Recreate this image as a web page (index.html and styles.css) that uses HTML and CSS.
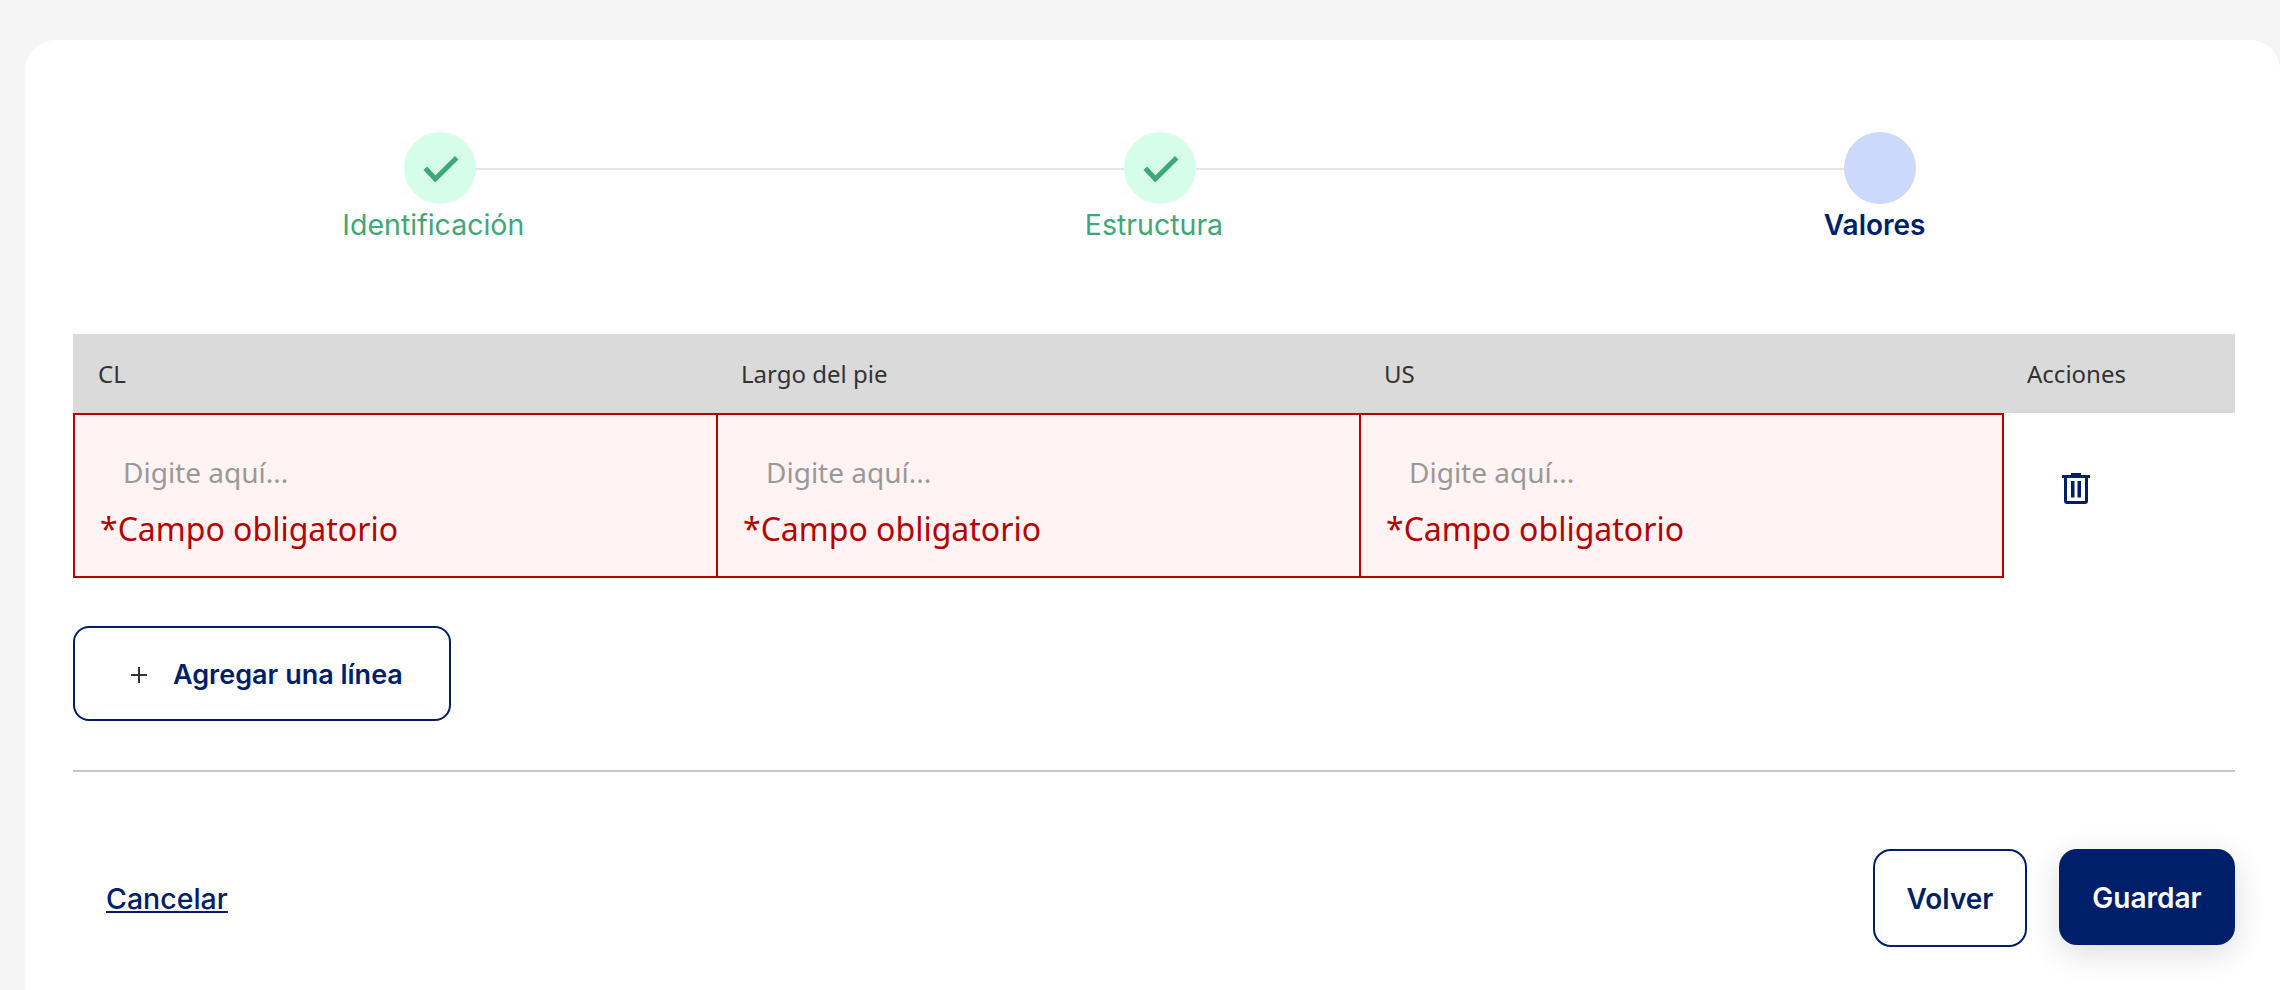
FILE: index.html
```html
<!DOCTYPE html>
<html lang="es">
<head>
    <meta charset="UTF-8">
    <meta name="viewport" content="width=device-width, initial-scale=1.0">
    <title>Valores</title>
    <link rel="stylesheet" href="styles.css">
</head>
<body>
    <div class="card">
        <div class="stepper">
            <div class="step step-done">
                <span class="step-circle">
                    <svg width="72" height="72" viewBox="0 0 72 72"><path d="M21.3 36.3 L31.3 47 L52.7 25.7" fill="none" stroke="#3fa876" stroke-width="5"/></svg>
                </span>
                <span class="step-label">Identificación</span>
            </div>
            <div class="step step-done">
                <span class="step-circle">
                    <svg width="72" height="72" viewBox="0 0 72 72"><path d="M21.3 36.3 L31.3 47 L52.7 25.7" fill="none" stroke="#3fa876" stroke-width="5"/></svg>
                </span>
                <span class="step-label">Estructura</span>
            </div>
            <div class="step step-current">
                <span class="step-circle"></span>
                <span class="step-label">Valores</span>
            </div>
        </div>

        <div class="values-table">
            <div class="head-cell">CL</div>
            <div class="head-cell">Largo del pie</div>
            <div class="head-cell">US</div>
            <div class="head-cell">Acciones</div>

            <div class="value-cell">
                <input class="value-input" type="text" placeholder="Digite aquí...">
                <p class="error-text">*Campo obligatorio</p>
            </div>
            <div class="value-cell">
                <input class="value-input" type="text" placeholder="Digite aquí...">
                <p class="error-text">*Campo obligatorio</p>
            </div>
            <div class="value-cell">
                <input class="value-input" type="text" placeholder="Digite aquí...">
                <p class="error-text">*Campo obligatorio</p>
            </div>
            <div class="action-cell">
                <svg width="28" height="31" viewBox="0 0 28 31"><path d="M9 0 H19 V2 H28 V5 H26 V28 Q26 31 23 31 H5 Q2 31 2 28 V5 H0 V2 H9 Z M5 5 V28 H23 V5 Z M9 8 H12.5 V24.5 H9 Z M15.5 8 H19 V24.5 H15.5 Z" fill="#001f6b" fill-rule="evenodd"/></svg>
            </div>
        </div>

        <button class="add-line">
            <svg class="plus" width="16" height="16" viewBox="0 0 16 16"><path d="M8 0 V16 M0 8 H16" fill="none" stroke="#333333" stroke-width="2"/></svg>
            Agregar una línea
        </button>

        <div class="footer">
            <a class="cancel" href="#">Cancelar</a>
            <div class="footer-buttons">
                <button class="btn btn-outline">Volver</button>
                <button class="btn btn-primary">Guardar</button>
            </div>
        </div>
    </div>
</body>
</html>
```

FILE: styles.css
```css
body {
    margin: 0;
    padding: 40px 0 0 25px;
    height: 990px;
    box-sizing: border-box;
    overflow: hidden;
    background-color: #f5f5f5;
    font-family: 'Inter', sans-serif;
}

.card {
    height: 950px;
    box-sizing: border-box;
    padding: 92px 45px 0 48px;
    background: #ffffff;
    border-radius: 30px 30px 0 0;
}

/* Stepper */
.stepper {
    display: grid;
    grid-template-columns: repeat(3, 1fr);
}

.step {
    position: relative;
    display: flex;
    flex-direction: column;
    align-items: center;
}

.step-circle {
    width: 72px;
    height: 72px;
    margin-left: 14px;
    border-radius: 50%;
}

.step:nth-child(2) .step-circle {
    margin-left: 12px;
}

.step:nth-child(3) .step-circle {
    margin-left: 10px;
}

.step-done .step-circle {
    background: #d6fdea;
}

.step-current .step-circle {
    background: #ccd9fd;
}

.step-done::after {
    content: "";
    position: absolute;
    top: 36px;
    left: calc(50% + 42px);
    width: calc(100% - 72px);
    height: 2px;
    background: #e5e5e5;
}

.step-label {
    margin-top: 1px;
    line-height: 40px;
}

.step-done .step-label {
    font-size: 28.5px;
    color: #3fa876;
}

.step-current .step-label {
    font-size: 28px;
    color: #001f6b;
    font-weight: 600;
}

/* Tabla */
.values-table {
    display: grid;
    grid-template-columns: 643px 643px 643px 233px;
    margin-top: 89px;
    font-family: 'Noto Sans', sans-serif;
}

.head-cell {
    height: 79px;
    padding-left: 25px;
    display: flex;
    align-items: center;
    background: #dadada;
    font-size: 24px;
    color: #333333;
}

.value-cell {
    height: 165px;
    box-sizing: border-box;
    padding: 38px 24px 0 25px;
    margin-right: -2px;
    background: #fff3f3;
    border: 2px solid #b40404;
}

.value-input {
    display: block;
    width: 100%;
    padding: 0 0 0 23px;
    border: none;
    outline: none;
    background: transparent;
    font-family: inherit;
    font-size: 28px;
    line-height: 38px;
}

.value-input::placeholder {
    color: #999999;
}

.error-text {
    margin: 18px 0 0;
    font-size: 32px;
    line-height: 40px;
    color: #b40404;
}

.action-cell {
    padding: 60px 0 0 60px;
}

/* Botones */
.add-line {
    display: flex;
    align-items: center;
    width: 378px;
    height: 95px;
    margin-top: 48px;
    padding: 2px 0 0 56px;
    border: 2px solid #001f6b;
    border-radius: 16px;
    background: #ffffff;
    color: #001f6b;
    font-family: inherit;
    font-size: 27px;
    font-weight: 600;
    cursor: pointer;
}

.plus {
    margin-right: 26px;
}

.footer {
    display: flex;
    justify-content: space-between;
    align-items: center;
    margin-top: 49px;
    padding: 77px 0 0 33px;
    border-top: 2px solid #c8c8c8;
}

.cancel {
    font-size: 28.5px;
    font-weight: 500;
    color: #001f6b;
}

.footer-buttons {
    display: flex;
    align-items: flex-start;
    gap: 32px;
}

.btn {
    height: 96px;
    padding-top: 3px;
    border-radius: 18px;
    font-family: inherit;
    font-size: 28px;
    font-weight: 600;
    cursor: pointer;
}

.btn-outline {
    width: 154px;
    height: 98px;
    border: 2px solid #001f6b;
    background: #ffffff;
    color: #001f6b;
}

.btn-primary {
    width: 176px;
    border: none;
    background: #001f6b;
    color: #ffffff;
    box-shadow: 0 8px 32px rgba(0, 0, 0, 0.14);
}
```
